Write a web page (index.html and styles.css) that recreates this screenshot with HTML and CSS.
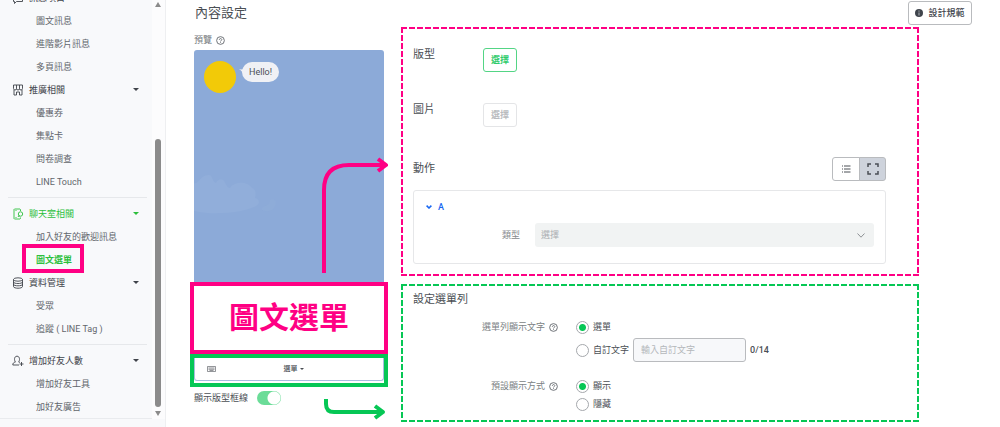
FILE: index.html
```html
<!DOCTYPE html>
<html lang="zh-Hant">
<head>
  <meta charset="UTF-8" />
  <meta name="viewport" content="width=device-width, initial-scale=1.0"/>
  <title>圖文選單</title>
  <link rel="stylesheet" href="styles.css">
</head>
<body>
  <aside class="sidebar">
    <nav class="menu">
      <ul>
        <li class="group">
          <svg class="icon" viewBox="0 0 12 12"><path d="M1.5 1.5h9v8h-6l-2 2v-2h-1z"/></svg>
          <a href="#">訊息項目</a><span class="caret"></span>
        </li>
        <li><a href="#">圖文訊息</a></li>
        <li><a href="#">進階影片訊息</a></li>
        <li><a href="#">多頁訊息</a></li>
        <li class="group">
          <svg class="icon" viewBox="0 0 12 12"><path d="M1.5 1h9v3.5a1.5 1.5 0 0 1-3 0a1.5 1.5 0 0 1-3 0a1.5 1.5 0 0 1-3 0zM4.5 1v3.5M7.500 1v3.500M2 6v5h2.500V8h3v3H10V6"/></svg>
          <a href="#">推廣相關</a><span class="caret"></span>
        </li>
        <li><a href="#">優惠券</a></li>
        <li><a href="#">集點卡</a></li>
        <li><a href="#">問卷調查</a></li>
        <li><a href="#">LINE Touch</a></li>
      </ul>
      <ul>
        <li class="group open">
          <svg class="icon" viewBox="0 0 12 12"><path d="M8.500 3V1.500L8 1H2.500L2 1.500v9l.5.5H8l.5-.5V9.500M3.500 2.500h1M3.500 9.500h1"/><circle cx="8.500" cy="6" r="2.200"/><path d="M6.800 7.500l-.6 1 1.500-.3"/></svg>
          <a href="#">聊天室相關</a><span class="caret"></span>
        </li>
        <li><a href="#">加入好友的歡迎訊息</a></li>
        <li class="active"><a href="#">圖文選單</a></li>
        <li class="group">
          <svg class="icon" viewBox="0 0 12 12"><ellipse cx="6" cy="2.500" rx="4.500" ry="1.700"/><path d="M1.500 2.500v7c0 2.300 9 2.300 9 0v-7M1.500 5c0 2 9 2 9 0M1.500 7.300c0 2 9 2 9 0"/></svg>
          <a href="#">資料管理</a><span class="caret"></span>
        </li>
        <li><a href="#">受眾</a></li>
        <li><a href="#">追蹤 ( LINE Tag )</a></li>
      </ul>
      <ul>
        <li class="group">
          <svg class="icon" viewBox="0 0 12 12"><path d="M7 10H.8c0-2 1-2.500 2.700-3C2 5.500 2 1.200 5 1.200S8 5.500 6.600 7l1.200.5M9.500 7v4M7.500 9h4"/></svg>
          <a href="#">增加好友人數</a><span class="caret"></span>
        </li>
        <li><a href="#">增加好友工具</a></li>
        <li><a href="#">加好友廣告</a></li>
      </ul>
    </nav>
    <div class="scrollbar">
      <span class="arrow-up"></span>
      <span class="thumb"></span>
      <span class="arrow-down"></span>
    </div>
  </aside>

  <main class="main">
    <header class="top">
      <h1>內容設定</h1>
      <button class="btn guide">
        <svg viewBox="0 0 8 8"><circle cx="4" cy="4" r="4" fill="#3f444c"/><path d="M4 1.500v1.200M4 3.500v3" stroke="#b5b8bd" stroke-width="1"/></svg>
        設計規範
      </button>
    </header>

    <div class="content">
      <section class="preview">
        <div class="preview-label">預覽
          <svg class="help" viewBox="0 0 10 10"><circle cx="5" cy="5" r="4.300"/><path d="M3.700 4.200c0-1.800 2.700-1.800 2.700-.1 0 1-1.400 1-1.400 2M5 6.900v.8"/></svg>
        </div>
        <div class="chat">
          <div class="message">
            <span class="avatar"></span>
            <svg class="tail" viewBox="0 0 6 8"><path d="M0 1c2 1 4 0 6 0v7C4 5 3 3 0 1z"/></svg>
            <span class="bubble">Hello!</span>
          </div>
          <svg class="cloud" viewBox="0 0 84 46">
            <path d="M0 10C4 12 6 2 15 2c4 0 3 7 7 8 2-5 8-5 9 0 2 2 2 5 5 5 3-6 17-8 22 0 4 1 4 6 3 10 5 1 5 6 1 8-10 6-40 10-62 5z"/>
            <path d="M68 37c0-6 7-2 8-10 4-2 8 1 5 6-1 4-6 7-13 4z" opacity=".4"/>
          </svg>
        </div>
        <div class="rich-menu">圖文選單</div>
        <div class="menu-bar">
          <div class="menu-bar-inner">
            <svg class="keyboard" viewBox="0 0 9 6"><path d="M.5.5h8v5h-8zM1.500 2h6M1.500 3.300h6M2.500 4.500h4"/></svg>
            <span class="menu-name">選單<span class="caret"></span></span>
          </div>
        </div>
        <div class="frame-toggle">
          <label for="frame">顯示版型框線</label>
          <input type="checkbox" id="frame" class="switch" checked>
        </div>
        <svg class="arrows" viewBox="0 0 70 270">
          <path class="pink" d="M4 118V35Q4 10 29 10H66M58 4l8 6-8 6"/>
          <path class="green" d="M6 244v5q0 8 8 8h49M55 251l8 6-8 6"/>
        </svg>
      </section>

      <div class="panels">
        <section class="panel panel-pink">
          <div class="row">
            <h2>版型</h2>
            <button class="btn btn-green">選擇</button>
          </div>
          <div class="row row-image">
            <h2>圖片</h2>
            <button class="btn" disabled>選擇</button>
          </div>
          <div class="row row-action">
            <h2>動作</h2>
            <div class="views">
              <button class="btn" aria-label="list"><svg viewBox="0 0 10 10"><path d="M1 2h1M3 2h6.500M1 5h1M3 5h6.500M1 8h1M3 8h6.500"/></svg></button>
              <button class="btn selected" aria-label="area"><svg viewBox="0 0 12 12"><path d="M1 4V1h3M8 1h3v3M11 8v3H8M4 11H1V8" stroke-width="1.500"/></svg></button>
            </div>
          </div>
          <div class="card">
            <a href="#" class="card-title"><svg viewBox="0 0 6 4"><path d="M.6.600L3 3 5.400.600"/></svg>A</a>
            <div class="field">
              <label for="type">類型</label>
              <div class="select">
                <select id="type" disabled><option>選擇</option></select>
                <svg viewBox="0 0 8 5"><path d="M.5.500L4 4.200 7.500.500"/></svg>
              </div>
            </div>
          </div>
        </section>

        <section class="panel panel-green">
          <h2>設定選單列</h2>
          <div class="option-row">
            <div class="option-label">選單列顯示文字
              <svg class="help" viewBox="0 0 10 10"><circle cx="5" cy="5" r="4.300"/><path d="M3.700 4.200c0-1.800 2.700-1.800 2.700-.1 0 1-1.400 1-1.400 2M5 6.900v.8"/></svg>
            </div>
            <div class="options">
              <label><input type="radio" name="bar" checked>選單</label>
              <div class="custom">
                <label><input type="radio" name="bar">自訂文字</label>
                <input type="text" aria-label="自訂文字" placeholder="輸入自訂文字" disabled>
                <span class="count">0/14</span>
              </div>
            </div>
          </div>
          <div class="option-row">
            <div class="option-label">預設顯示方式
              <svg class="help" viewBox="0 0 10 10"><circle cx="5" cy="5" r="4.300"/><path d="M3.700 4.200c0-1.800 2.700-1.800 2.700-.1 0 1-1.400 1-1.400 2M5 6.900v.8"/></svg>
            </div>
            <div class="options">
              <label><input type="radio" name="show" checked>顯示</label>
              <label><input type="radio" name="show">隱藏</label>
            </div>
          </div>
        </section>
      </div>
    </div>
  </main>
</body>
</html>
```
FILE: styles.css
```css
*, *::before, *::after {
  box-sizing: border-box;
}
body {
  margin: 0;
  display: flex;
  height: 100vh;
  overflow: hidden;
  font-family: Roboto, "Noto Sans CJK TC", sans-serif;
  font-size: 9px;
  line-height: 12px;
  color: #4b4f55;
  background: #fff;
}
h1, h2, ul {
  margin: 0;
  padding: 0;
  font-weight: normal;
}
h1 {
  font-size: 13px;
  line-height: 18px;
}
h2 {
  font-size: 11px;
  line-height: 14px;
}
a {
  color: inherit;
  text-decoration: none;
}
svg {
  display: block;
  flex: none;
  fill: none;
  stroke: currentColor;
}
button, input, select {
  font: inherit;
  color: inherit;
  margin: 0;
}

/* sidebar */
.sidebar {
  display: flex;
  flex: none;
  width: 166px;
  padding-bottom: 8px;
  background: #f8f9fb;
  border-right: 1px solid #eeeff1;
}
.menu {
  flex: 1;
  display: flex;
  flex-direction: column;
  justify-content: flex-end;
  overflow: hidden;
  padding: 0 5px 0 8px;
  border-bottom: 1px solid #e9ebee;
}
.menu ul {
  list-style: none;
}
.menu ul + ul {
  margin-top: 4px;
  padding-top: 4px;
  border-top: 1px solid #e6e8eb;
}
.menu li {
  position: relative;
  display: flex;
  align-items: center;
  height: 23px;
  padding-left: 28px;
  color: #62666c;
}
.menu .group {
  gap: 5px;
  padding: 0 8px 0 4px;
  color: #3f434a;
}
.menu .open {
  color: #2cbf3c;
}
.menu .active {
  color: #2cbf3c;
  font-weight: bold;
}
.active::after {
  content: "";
  position: absolute;
  left: 14px;
  top: -4px;
  width: 62px;
  height: 29px;
  border: 4px solid #ff0084;
}
.icon {
  width: 12px;
  height: 12px;
  stroke-width: 0.9;
}
.caret {
  margin-left: auto;
  border: 3px solid transparent;
  border-top-color: currentColor;
  border-bottom: 0;
}
.scrollbar {
  display: flex;
  flex-direction: column;
  align-items: center;
  width: 13px;
  padding: 2px 1px 3px 0;
  background: #fcfcfd;
}
.thumb {
  width: 6px;
  flex: 1;
  margin: 132px 0 4px;
  border-radius: 3px;
  background: #8b8b8b;
}
.arrow-up, .arrow-down {
  border: 3px solid transparent;
}
.arrow-up {
  border-top: 0;
  border-bottom: 5px solid #8b8b8b;
}
.arrow-down {
  border-bottom: 0;
  border-top: 5px solid #8b8b8b;
}

/* main */
.main {
  flex: 1;
  min-width: 0;
}
.top {
  display: flex;
  justify-content: space-between;
  align-items: center;
  padding: 1px 28px 2px 29px;
}
.btn {
  display: flex;
  align-items: center;
  justify-content: center;
  width: 34px;
  height: 24px;
  padding: 0;
  font-weight: bold;
  background: #fff;
  border: 1px solid #b9bbbe;
  border-radius: 3px;
}
.btn:disabled {
  color: #b9bbbe;
  border-color: #e4e5e7;
}
.btn-green {
  color: #2fcb6b;
  border-color: #53d585;
}
.guide {
  width: 64px;
  gap: 5px;
  font-weight: 500;
  color: #3f444c;
}
.guide svg {
  width: 8px;
  height: 8px;
  stroke: none;
}
.content {
  display: flex;
  gap: 13px;
  padding: 0 81px 0 24px;
}

/* preview */
.preview {
  position: relative;
  flex: none;
  width: 198px;
}
.preview-label {
  display: flex;
  align-items: center;
  gap: 4px;
  padding: 7px 4px 4px;
  color: #777b80;
}
.help {
  width: 9px;
  height: 9px;
  color: #62666c;
}
.chat {
  height: 232px;
  margin: 0 4px;
  padding-top: 11px;
  background: #8caad8;
  border-radius: 3px 3px 0 0;
}
.message {
  display: flex;
  padding-left: 10px;
}
.avatar {
  width: 32px;
  height: 32px;
  border-radius: 50%;
  background: #f2ca08;
}
.bubble {
  height: 20px;
  margin-top: 1px;
  padding: 0 7px;
  line-height: 20px;
  border-radius: 10px;
  background: #f0f1f5;
}
.tail {
  width: 6px;
  height: 8px;
  margin: 7px -3px 0 3px;
  fill: #f0f1f5;
  stroke: none;
}
.cloud {
  width: 84px;
  height: 46px;
  margin-top: 80px;
  fill: #91aeda;
  stroke: none;
}
.rich-menu {
  display: flex;
  align-items: center;
  justify-content: center;
  height: 72px;
  border: 4px solid #ff0084;
  font-size: 30px;
  font-weight: bold;
  color: #ff0084;
}
.menu-bar {
  height: 33px;
  padding-bottom: 2px;
  border: 4px solid #06c755;
}
.menu-bar-inner {
  display: flex;
  align-items: center;
  height: 23px;
  padding: 0 12px;
  font-size: 7px;
  font-weight: 500;
  border: solid #a9bcdf;
  border-width: 0 1px 1px;
  border-radius: 0 0 3px 3px;
}
.menu-name {
  flex: 1;
  display: flex;
  align-items: center;
  justify-content: center;
  gap: 2px;
}
.menu-name .caret {
  margin: 0;
  border-width: 2px 2px 0;
}
.keyboard {
  width: 9px;
  height: 6px;
  stroke-width: 0.6;
}
.frame-toggle {
  display: flex;
  align-items: center;
  gap: 9px;
  padding: 4px;
}
.switch {
  appearance: none;
  width: 24px;
  height: 14px;
  border-radius: 7px;
  background: radial-gradient(circle at 17px 7px, #fff 6px, #6bdc98 7px);
}
.arrows {
  position: absolute;
  left: 130px;
  top: 128px;
  width: 70px;
  height: 270px;
  stroke-width: 4;
  stroke-linejoin: round;
}
.pink {
  stroke: #ff0084;
}
.green {
  stroke: #06c755;
}

/* panels, dashed on every side with an 8px period */
.panels {
  flex: 1;
  min-width: 0;
}
.panel {
  background:
    repeating-linear-gradient(90deg, var(--dash) 0 6px, transparent 6px 8px) top / 100% 2px no-repeat,
    repeating-linear-gradient(90deg, var(--dash) 0 6px, transparent 6px 8px) bottom / 100% 2px no-repeat,
    repeating-linear-gradient(var(--dash) 0 6px, transparent 6px 8px) left / 2px 100% no-repeat,
    repeating-linear-gradient(var(--dash) 0 6px, transparent 6px 8px) right / 2px 100% no-repeat;
}
.panel-pink {
  --dash: #ff0084;
  padding: 21px 33px 12px 12px;
}
.panel-green {
  --dash: #06c755;
  margin-top: 8px;
  padding: 9px 33px 9px 12px;
}
.row {
  display: flex;
}
.row h2 {
  width: 70px;
}
.row-image {
  margin-top: 31px;
}
.row-action {
  align-items: center;
  justify-content: space-between;
  margin: 30px 0 9px;
}
.views {
  display: flex;
}
.views .btn {
  width: 28px;
  border-radius: 3px 0 0 3px;
}
.views .selected {
  width: 27px;
  margin-left: -1px;
  background: #ced3dc;
  border-radius: 0 3px 3px 0;
}
.views svg {
  width: 10px;
  height: 10px;
}
.views .selected svg {
  width: 12px;
  height: 12px;
}
.card {
  height: 74px;
  padding: 10px 11px 0 12px;
  border: 1px solid #e6e7e9;
  border-radius: 3px;
}
.card-title {
  display: flex;
  align-items: center;
  gap: 6px;
  font-weight: 500;
  color: #1767f2;
}
.card-title svg {
  width: 6px;
  height: 4px;
  stroke-width: 1.5;
}
.field {
  display: flex;
  align-items: center;
  margin-top: 10px;
}
.field label {
  width: 94px;
  text-align: right;
  color: #85888c;
}
.select {
  position: relative;
  flex: 1;
  margin-left: 15px;
}
.select select {
  appearance: none;
  display: block;
  width: 100%;
  height: 24px;
  padding: 0 6px;
  color: #aaadb1;
  opacity: 1;
  background: #f1f3f3;
  border: 0;
  border-radius: 3px;
}
.select svg {
  position: absolute;
  right: 9px;
  top: 10px;
  width: 8px;
  height: 5px;
  color: #8d9094;
}

/* menu bar options */
.option-row {
  display: grid;
  grid-template-columns: 145px 1fr;
  gap: 18px;
  margin-top: 11px;
}
.option-row + .option-row {
  margin-top: 15px;
}
.option-label {
  display: flex;
  align-items: center;
  justify-content: flex-end;
  gap: 4px;
  height: 18px;
  color: #7b7f84;
}
.options label {
  display: flex;
  align-items: center;
  gap: 4px;
  height: 18px;
}
.options input[type="radio"] {
  appearance: none;
  width: 13px;
  height: 13px;
  border: 1px solid #a5a8ac;
  border-radius: 50%;
}
.options input[type="radio"]:checked {
  background: radial-gradient(circle, #06c755 3px, transparent 4px);
}
.custom {
  display: flex;
  align-items: center;
  gap: 4px;
  margin-top: 2px;
}
.custom input[type="text"] {
  width: 113px;
  height: 24px;
  padding: 0 7px;
  background: #f7f8fa;
  border: 1px solid #b9bbbe;
  border-radius: 3px;
}
.custom input::placeholder {
  color: #b4b7bb;
}
.count {
  font-weight: 500;
}
```
